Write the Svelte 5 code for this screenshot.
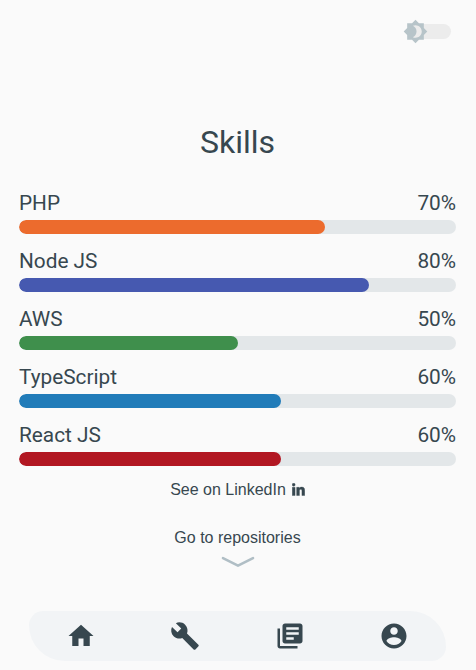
<script>
  const skills = [
    { name: 'PHP', value: 70, color: '#ec6b2d' },
    { name: 'Node JS', value: 80, color: '#4659b0' },
    { name: 'AWS', value: 50, color: '#3f8f4c' },
    { name: 'TypeScript', value: 60, color: '#217cb9' },
    { name: 'React JS', value: 60, color: '#b21722' }
  ];
  const nav = [
    { label: 'Home', d: 'M10 20v-6h4v6h5v-8h3L12 3 2 12h3v8z' },
    { label: 'Tools', d: 'M22.7 19l-9.1-9.1c.9-2.3.4-5-1.5-6.9-2-2-5-2.4-7.4-1.3L9 6 6 9 1.6 4.7C.4 7.1.9 10.1 2.9 12.1c1.9 1.9 4.6 2.4 6.9 1.5l9.1 9.1c.4.4 1 .4 1.4 0l2.3-2.3c.5-.4.5-1.1.1-1.4z' },
    { label: 'Library', d: 'M4 6H2v14c0 1.1.9 2 2 2h14v-2H4V6zm16-4H8c-1.1 0-2 .9-2 2v12c0 1.1.9 2 2 2h12c1.1 0 2-.9 2-2V4c0-1.1-.9-2-2-2zm-1 9H9V9h10v2zm-4 4H9v-2h6v2zm4-8H9V5h10v2z' },
    { label: 'Account', d: 'M12 2C6.48 2 2 6.48 2 12s4.48 10 10 10 10-4.48 10-10S17.52 2 12 2zm0 3c1.66 0 3 1.34 3 3s-1.34 3-3 3-3-1.34-3-3 1.34-3 3-3zm0 14.2c-2.5 0-4.71-1.28-6-3.22.03-1.99 4-3.08 6-3.08 1.99 0 5.97 1.09 6 3.08-1.29 1.94-3.5 3.22-6 3.22z' }
  ];
</script>

<div class="page">
  <header>
    <button class="toggle" aria-label="Toggle theme">
      <svg viewBox="0 0 24 24" width="25" height="25"><path fill="#b7c4c9" d="M20 8.69V4h-4.69L12 .69 8.69 4H4v4.69L.69 12 4 15.31V20h4.69L12 23.31 15.31 20H20v-4.69L23.31 12 20 8.69zM12 18c-.89 0-1.74-.2-2.5-.55C11.56 16.5 13 14.42 13 12s-1.44-4.5-3.5-5.45C10.26 6.2 11.11 6 12 6c3.31 0 6 2.69 6 6s-2.69 6-6 6z" /></svg>
    </button>
  </header>
  <main>
    <h1>Skills</h1>
    <div class="skills">
      {#each skills as skill}
        <section>
          <div class="label"><span>{skill.name}</span><span>{skill.value}%</span></div>
          <div class="track"><div class="fill" style="width: {skill.value}%; background: {skill.color}"></div></div>
        </section>
      {/each}
    </div>
    <a class="linkedin" href="#linkedin">See on LinkedIn
      <svg viewBox="0 0 14 14" width="13" height="13"><path fill="currentColor" stroke="currentColor" stroke-width=".4" d="M.3 4.7h3v8.8h-3zM1.8.3a1.6 1.6 0 1 1 0 3.2 1.6 1.6 0 0 1 0-3.2zM5 4.7h2.9v1.1c.5-.9 1.4-1.4 2.6-1.4 2.6 0 3.2 1.6 3.2 3.9v5.2h-3V8.9c0-1.2-.1-2.1-1.3-2.1S8 7.6 8 8.8v4.7H5z" /></svg>
    </a>
    <a class="repos" href="#repositories">
      <span>Go to repositories</span>
      <svg viewBox="0 0 34 12" width="34" height="12"><path d="M2 2.2L17 9.6 32 2.2" fill="none" stroke="#b0bec5" stroke-width="2.6" stroke-linecap="round" stroke-linejoin="round" /></svg>
    </a>
  </main>
  <nav>
    {#each nav as item}
      <a href="#{item.label}" aria-label={item.label}><svg viewBox="0 0 24 24" width="30" height="30"><path d={item.d} fill="currentColor" /></svg></a>
    {/each}
  </nav>
</div>

<style>
  :global(body) { background: #fafafa; }
  .page {
    box-sizing: border-box;
    height: 670px;
    padding-bottom: 9px;
    display: flex;
    flex-direction: column;
    overflow: hidden;
    background: #fafafa;
    color: #37474f;
    font-family: "Liberation Sans", Arial, sans-serif;
    font-size: 16px;
  }
  a { color: inherit; text-decoration: none; }
  svg { display: block; }
  header {
    display: flex;
    justify-content: flex-end;
    padding: 24px 25px 0 0;
    height: 98px;
    box-sizing: border-box;
  }
  .toggle {
    display: flex;
    align-items: center;
    width: 43px;
    height: 15px;
    padding: 0;
    border: 0;
    border-radius: 8px;
    background: #ececec;
  }
  .toggle svg { margin-left: -5px; flex: none; }
  main {
    flex: 1;
    display: flex;
    flex-direction: column;
    align-items: center;
    padding-right: 1px;
  }
  h1 {
    margin: 22px 0 0;
    font: 400 32px/44px Roboto, sans-serif;
  }
  .skills {
    align-self: stretch;
    margin: 25px 19px 0 19px;
  }
  section { height: 58px; }
  .label {
    display: flex;
    justify-content: space-between;
    font: 400 20.8px/28px Roboto, sans-serif;
    height: 31px;
  }
  .track {
    height: 14px;
    border-radius: 7px;
    background: #e3e7e9;
    overflow: hidden;
  }
  .fill { height: 100%; border-radius: 7px; }
  .linkedin {
    display: flex;
    align-items: center;
    gap: 6px;
    height: 20px;
    margin-top: 1px;
  }
  .linkedin svg { margin-bottom: 2px; }
  .repos {
    display: flex;
    flex-direction: column;
    align-items: center;
    margin-top: 28px;
    line-height: 20px;
  }
  .repos svg { margin-top: 8px; }
  nav {
    display: flex;
    height: 50px;
    margin: 0 30px 0 29px;
    border-radius: 14.3px 35.7px;
    background: #f2f4f6;
  }
  nav a {
    flex: 1;
    display: flex;
    align-items: center;
    justify-content: center;
  }
</style>
